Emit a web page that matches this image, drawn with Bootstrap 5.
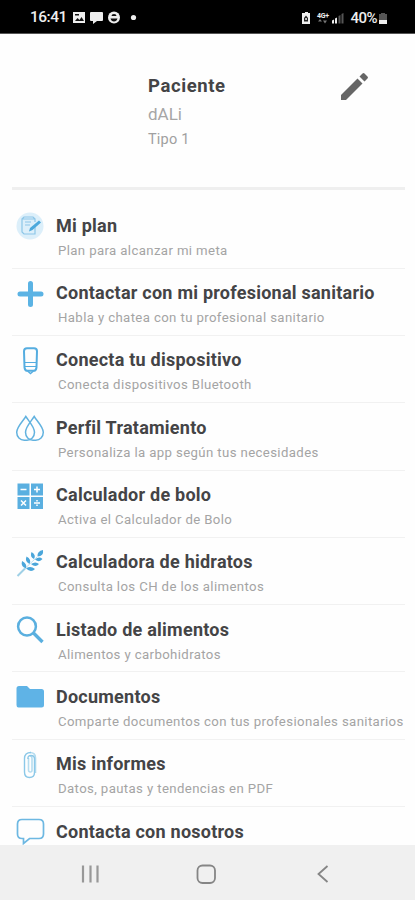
<!DOCTYPE html>
<html lang="es">
<head>
<meta charset="utf-8">
<meta name="viewport" content="width=device-width, initial-scale=1">
<title>Paciente</title>
<link href="https://cdn.jsdelivr.net/npm/bootstrap@5.3.0/dist/css/bootstrap.min.css" rel="stylesheet">
<style>
  body { font-family: Roboto, "Noto Sans", sans-serif; background: #fefefe; color: #444446; }
  .screen { height: 900px; }
  .status { height: 34px; background: #000; color: #eee; padding: 3px 28px 0 30px; border-bottom: 1px solid #555; }
  .clock { font-size: 15.5px; font-weight: 500; letter-spacing: -.5px; width: 42px; }
  .level { font-size: 15px; font-weight: 500; letter-spacing: -.5px; }
  .battery { margin-left: 2px; }
  .profile { height: 155.5px; margin: 0 10px 0 12px; padding: 38px 35px 0 136px; border-bottom: 3px solid #efefef; }
  .heading { font-size: 18px; font-weight: 700; line-height: 28px; letter-spacing: .24px; }
  .profile .heading { font-size: 18.5px; letter-spacing: .6px; }
  .user-name { font-size: 17px; line-height: 28px; color: #a6a6a6; }
  .user-type { font-size: 14.5px; line-height: 24px; color: #a0a0a0; letter-spacing: .2px; }
  .options { padding-top: 11.9px; }
  .option { height: 67.3px; margin-left: 12px; margin-right: 10px; padding-top: 10.500px; border-bottom: 1.6px solid #f1f1f1; }
  .option-icon { width: 36px; height: 30px; margin-right: 8px; padding-top: .5px; }
  .option-icon svg { display: block; margin: 0 auto; }
  .option-note { font-size: 13.2px; line-height: 22px; color: #a4a4a4; letter-spacing: .38px; padding-left: 2px; }
  .sysnav { height: 55px; background: #f0f0f0; padding: 2px 85px 0 79px; }
</style>
</head>
<body>
<div class="screen d-flex flex-column overflow-hidden">
  <header class="status d-flex align-items-center justify-content-between flex-shrink-0">
    <div class="d-flex align-items-center">
      <span class="clock">16:41</span>
      <svg width="66" height="14" viewBox="0 0 66 14" fill="#eee">
        <path d="M1 1h12v11H1z"/><path d="M3 10l2.500-3 2 2 2-3 2.500 4zM3 3h4v1.500H3z" fill="#111"/>
        <path d="M19 1h11q1 0 1 1v7q0 1-1 1h-5l-4 3v-3h-2q-1 0-1-1V2q0-1 1-1z"/>
        <circle cx="42" cy="6.500" r="6"/><path d="M38.500 7.500h7q-.8 3-3.500 3t-3.500-3zM39.500 5q0-2 2.500-2t2.500 2z" fill="#111"/>
        <circle cx="61.500" cy="6.500" r="2.600"/>
      </svg>
    </div>
    <div class="d-flex align-items-center">
      <svg width="46" height="14" viewBox="0 0 46 14" fill="#eee">
        <path d="M3 2h2V1h3v1h2v11H2V2z"/><path d="M4 7l2-2.500L8 7v3.500H4z" fill="#222"/><path d="M5.300 7h1.500v2H5.300z"/>
        <text x="17" y="7" font-size="7" font-weight="700" textLength="12">4G+</text>
        <path d="M20 8l-2 2.500h4zm5 4.500l-2-3h4z" fill="#777"/>
        <path d="M32 12.500v-3l2-1v4zm3 0V7.500l2-1v6z"/><path d="M38.500 12.500V5l2-1v8.500zm3 0V3l2-1v10.500z" fill="#555"/>
      </svg>
      <span class="level ms-1">40%</span>
      <svg class="battery" width="8" height="13" viewBox="0 0 8 13"><path d="M0 2h2V1h4v1h2v6H0z" fill="#555"/><path d="M0 8h8v4H0z" fill="#eee"/></svg>
    </div>
  </header>

  <section class="profile d-flex justify-content-between flex-shrink-0">
    <div>
      <div class="heading">Paciente</div>
      <div class="user-name">dALi</div>
      <div class="user-type">Tipo 1</div>
    </div>
    <svg width="30" height="30" viewBox="0 0 30 30" fill="#666"><path d="M1 23L17.500 6.500l5 5L6 28H1zM19.500 4.500l3-3q1-1 2 0l3 3q1 1 0 2l-3 3z"/></svg>
  </section>

  <main class="options flex-grow-1 overflow-hidden">
    <div class="option d-flex">
      <div class="option-icon flex-shrink-0"><svg width="30" height="30" viewBox="0 0 30 30" fill="none"><circle cx="15" cy="14" r="13.500" fill="#dceffa"/><path d="M20 13v9H9L7 20V7h13v3M7 7l2-2h9l2 2M10 10h6M10 13h5" stroke="#8cc6e8" stroke-width="1.200"/><path d="M24 8.500l2 2-8.500 7.500-3.500 1.500 1-3.500z" fill="#4ca9dc"/></svg></div>
      <div><div class="heading">Mi plan</div><div class="option-note">Plan para alcanzar mi meta</div></div>
    </div>
    <div class="option d-flex">
      <div class="option-icon flex-shrink-0"><svg width="30" height="30" viewBox="0 0 30 30"><path d="M15.500 3.500v21M5 14h21" stroke="#5bb3e4" stroke-width="5" stroke-linecap="round"/></svg></div>
      <div><div class="heading">Contactar con mi profesional sanitario</div><div class="option-note">Habla y chatea con tu profesional sanitario</div></div>
    </div>
    <div class="option d-flex">
      <div class="option-icon flex-shrink-0"><svg width="30" height="30" viewBox="0 0 30 30" fill="none" stroke="#55ade0"><path d="M12 1.300h7q3 0 3 3l-.5 16q-.3 3.500-3 3.500h-6q-2.700 0-3-3.500L9 4.300q0-3 3-3z" stroke-width="2"/><path d="M9.500 15.500h12M10 19.500h11" stroke-width="1.200"/><path d="M12.500 24l3 2.500 3-2.500" stroke-width="1.400"/></svg></div>
      <div><div class="heading">Conecta tu dispositivo</div><div class="option-note">Conecta dispositivos Bluetooth</div></div>
    </div>
    <div class="option d-flex">
      <div class="option-icon flex-shrink-0"><svg width="30" height="30" viewBox="0 0 30 30" fill="none" stroke="#62b2df" stroke-width="1.500"><path d="M10.800 2.500C8 7 1.700 13 1.700 18.300c0 4.500 3.400 7.900 7.500 7.900h2.800c4.100 0 7.500-3.400 7.500-7.900 0-5.300-5.900-11.300-8.700-15.800z"/><path d="M19.200 2.500C16.400 7 10.500 13 10.500 18.300c0 4.500 3.400 7.900 7.500 7.900h2.800c4.100 0 7.500-3.400 7.500-7.900C28.300 13 22 7 19.200 2.500z"/></svg></div>
      <div><div class="heading">Perfil Tratamiento</div><div class="option-note">Personaliza la app según tus necesidades</div></div>
    </div>
    <div class="option d-flex">
      <div class="option-icon flex-shrink-0"><svg width="30" height="30" viewBox="0 0 30 30"><path d="M2.500 1.500h12v12h-12zM16 1.500h12v12H16zM2.500 15h12v12h-12zM16 15h12v12H16z" fill="#5aafe0"/><path d="M5.500 7.500h6M19 7.500h6M22 4.500v6M6 18.500l5 5M11 18.500l-5 5M19 21h6M22 18v1.500M22 22.500V24" stroke="#fff" stroke-width="1.500"/></svg></div>
      <div><div class="heading">Calculador de bolo</div><div class="option-note">Activa el Calculador de Bolo</div></div>
    </div>
    <div class="option d-flex">
      <div class="option-icon flex-shrink-0"><svg width="30" height="30" viewBox="0 0 30 30"><path d="M2.500 27L10 19.500" stroke="#9fd0e6" stroke-width="2"/><path d="M10 19.500L22 8" stroke="#a9d6ee" stroke-width=".8"/><g fill="#4ba6da"><path d="M28 1q1 6-5.500 6.500Q22 2 28 1zM16.500 3q5 3 2.500 7-4.500-2-2.500-7zM11.500 7.500q5.500 3 3 7.500-5-2.500-3-7.500zM7 12q5.500 2.500 4 7.500-5.500-2-4-7.500zM20 10.500q4-3.500 7.500-.5-3 4-7.500.5zM16 15q4.500-3 8 0-3.500 4-8 0zM11 19.500q4.500-3 9 .5-4 4-9-.5z"/></g></svg></div>
      <div><div class="heading">Calculadora de hidratos</div><div class="option-note">Consulta los CH de los alimentos</div></div>
    </div>
    <div class="option d-flex">
      <div class="option-icon flex-shrink-0"><svg width="30" height="30" viewBox="0 0 30 30" fill="none" stroke="#5aafdf"><circle cx="12" cy="10.500" r="8.900" stroke-width="2.500"/><path d="M18.500 17l9 9" stroke-width="3.300"/></svg></div>
      <div><div class="heading">Listado de alimentos</div><div class="option-note">Alimentos y carbohidratos</div></div>
    </div>
    <div class="option d-flex">
      <div class="option-icon flex-shrink-0"><svg width="30" height="30" viewBox="0 0 30 30" fill="#5fb3e6"><path d="M4 3h8l3 3h11.500q2.500 0 2.500 2.500v13.500q0 2.500-2.500 2.500h-23Q1.500 24.500 1.500 22V5.500Q1.500 3 4 3z"/></svg></div>
      <div><div class="heading">Documentos</div><div class="option-note text-nowrap">Comparte documentos con tus profesionales sanitarios</div></div>
    </div>
    <div class="option d-flex">
      <div class="option-icon flex-shrink-0"><svg width="30" height="30" viewBox="0 0 30 30" fill="none"><path d="M13.500 7v12q0 2 1.800 2t1.700-2V7.500q0-2.500-2-2.500M20.500 22V7q0-5.500-5.500-5.500" stroke="#b5dcef" stroke-width="1.600"/><path d="M16 1.500Q9.500 1.500 9.500 7.500V21q0 5.500 5 5.500t5-5V8q0-3.500-3.500-3.500T13 8" stroke="#8bc8e8" stroke-width="1.400"/></svg></div>
      <div><div class="heading">Mis informes</div><div class="option-note">Datos, pautas y tendencias en PDF</div></div>
    </div>
    <div class="option d-flex border-0">
      <div class="option-icon flex-shrink-0"><svg width="30" height="30" viewBox="0 0 30 30" fill="none" stroke="#6db8e2" stroke-width="1.700"><path d="M7 1.500h17q4.500 0 4.500 4.500v10q0 4.500-4.500 4.500H14.500L8.500 25.500v-5H7Q2.500 20.500 2.500 16V6Q2.500 1.500 7 1.500z"/></svg></div>
      <div><div class="heading">Contacta con nosotros</div></div>
    </div>
  </main>

  <nav class="sysnav d-flex align-items-center justify-content-between flex-shrink-0">
    <svg width="24" height="24" viewBox="0 0 24 24" stroke="#989898" stroke-width="2.200"><path d="M4 3.500v17M11.500 3.500v17M18.500 3.500v17"/></svg>
    <svg width="24" height="24" viewBox="0 0 24 24" fill="none" stroke="#858585" stroke-width="1.800"><rect x="3.500" y="3.500" width="17.500" height="17.500" rx="5"/></svg>
    <svg width="22" height="24" viewBox="-7 0 22 24" fill="none" stroke="#858585" stroke-width="1.800"><path d="M12.500 4L3.500 12l9 8"/></svg>
  </nav>
</div>
<script src="https://cdn.jsdelivr.net/npm/bootstrap@5.3.0/dist/js/bootstrap.bundle.min.js"></script>
</body>
</html>
